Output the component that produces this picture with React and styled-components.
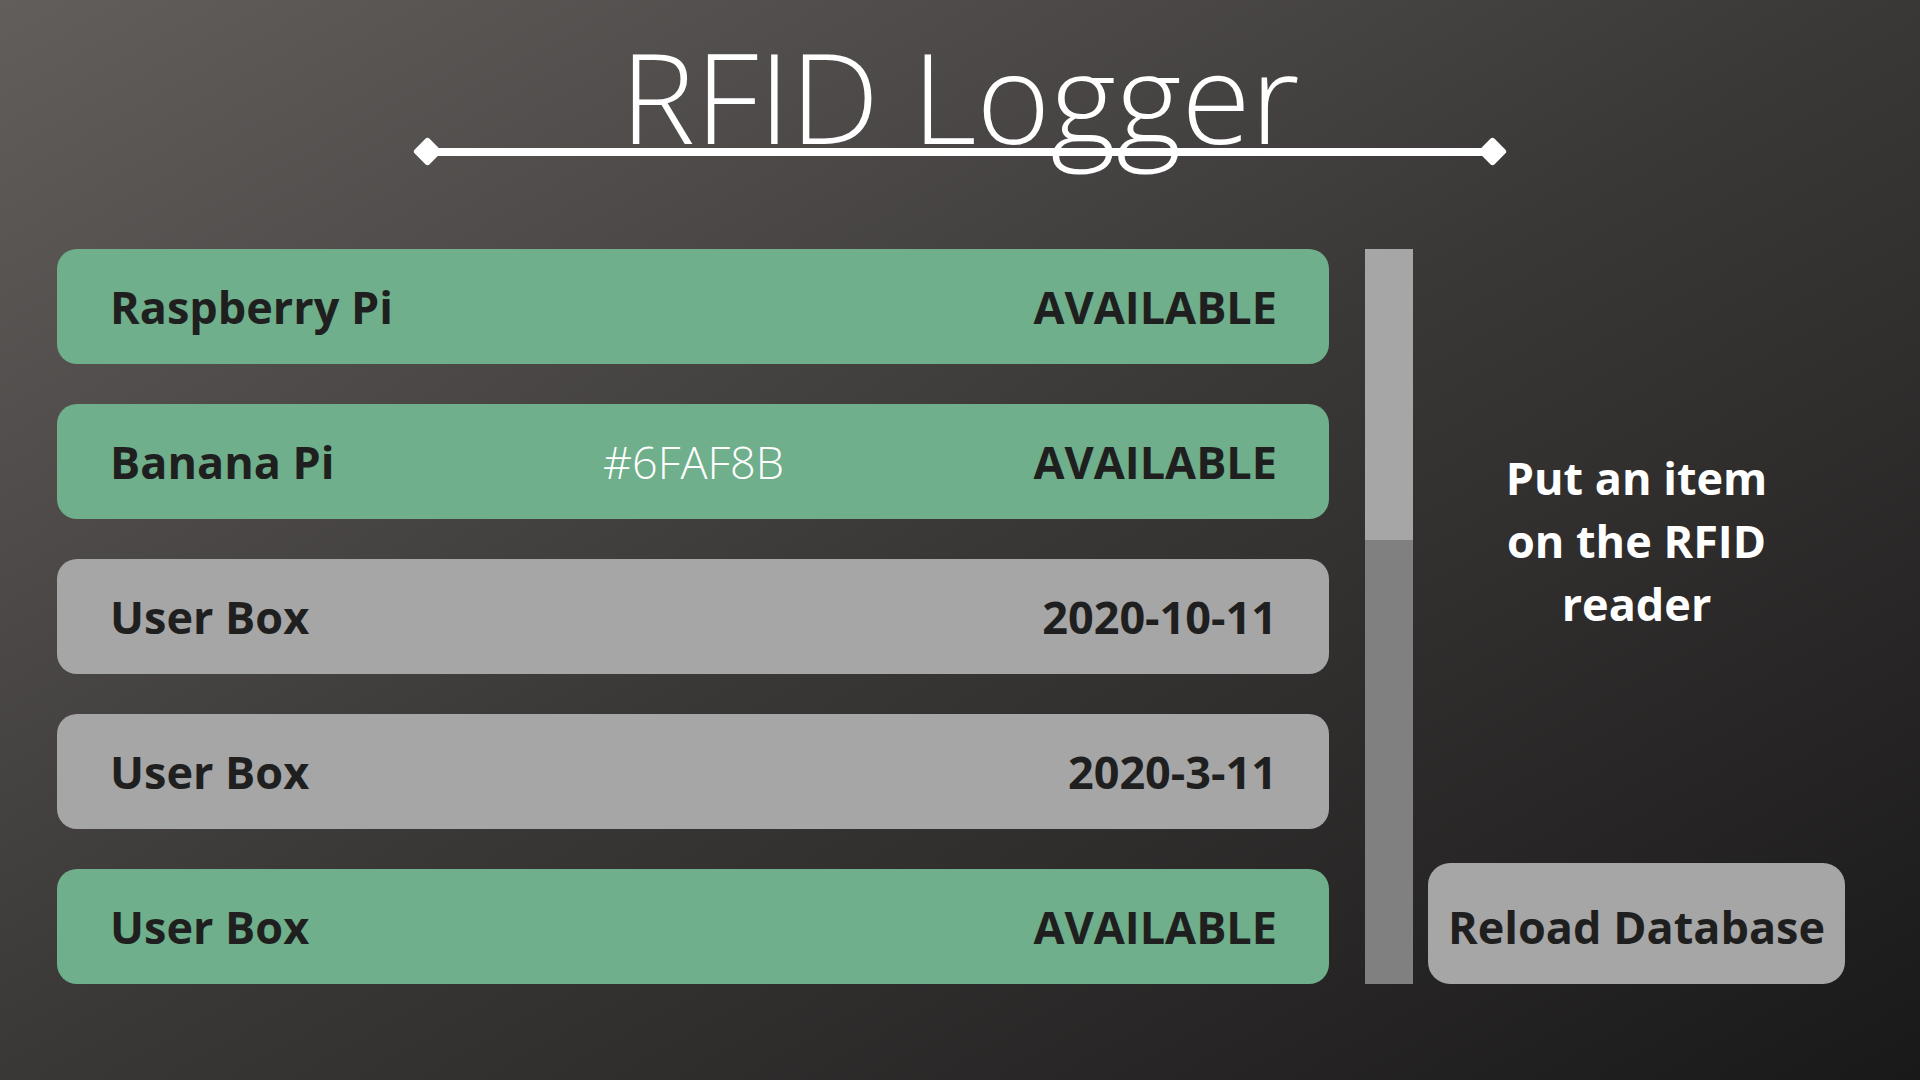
import styled, { createGlobalStyle } from "styled-components";

const GlobalStyle = createGlobalStyle`
  html, body {
    margin: 0;
    padding: 0;
  }
  body {
    font-family: "Open Sans", "Liberation Sans", sans-serif;
    background: #262525;
  }
`;

const items = [
  { name: "Raspberry Pi", status: "AVAILABLE", available: true },
  { name: "Banana Pi", note: "#6FAF8B", status: "AVAILABLE", available: true },
  { name: "User Box", status: "2020-10-11", available: false },
  { name: "User Box", status: "2020-3-11", available: false },
  { name: "User Box", status: "AVAILABLE", available: true },
];

const Divider = () => (
  <DividerSvg width="1096" height="32" viewBox="0 0 1096 32">
    <rect x="15" y="12" width="1066" height="8" fill="#fff" />
    <rect x="5" y="5" width="21" height="21" rx="3" fill="#fff" transform="rotate(45 15.5 15.5)" />
    <rect x="1070" y="5" width="21" height="21" rx="3" fill="#fff" transform="rotate(45 1080.5 15.5)" />
  </DividerSvg>
);

const App = () => {
  return (
    <Page>
      <GlobalStyle />
      <Header>
        <Title>RFID Logger</Title>
        <Divider />
      </Header>
      <Content>
        <ListArea>
          <RowList>
            {items.map((item, i) => (
              <Row key={i} $available={item.available}>
                <Name>{item.name}</Name>
                <Note>{item.note}</Note>
                <Status>{item.status}</Status>
              </Row>
            ))}
          </RowList>
          <ScrollTrack>
            <ScrollThumb />
          </ScrollTrack>
        </ListArea>
        <SidePanel>
          <Prompt>
            Put an item
            <br />
            on the RFID
            <br />
            reader
          </Prompt>
          <ReloadButton>Reload Database</ReloadButton>
        </SidePanel>
      </Content>
    </Page>
  );
};

const Page = styled.div`
  width: 1920px;
  height: 1080px;
  overflow: hidden;
  box-sizing: border-box;
  background: linear-gradient(to bottom right, #625e5c 0%, #3a3837 50%, #1a1919 100%);
`;

const Header = styled.header`
  display: flex;
  flex-direction: column;
  align-items: center;
  padding-top: 32px;
`;

const Title = styled.h1`
  margin: 0;
  font-family: "Open Sans", "Liberation Sans", sans-serif;
  font-weight: 300;
  font-size: 126px;
  line-height: 1;
  color: #ffffff;
`;

const DividerSvg = styled.svg`
  display: block;
  margin-top: -22px;
`;

const Content = styled.main`
  display: flex;
  align-items: stretch;
  padding: 81px 0 0 57px;
`;

const ListArea = styled.div`
  display: flex;
  gap: 36px;
`;

const RowList = styled.div`
  display: flex;
  flex-direction: column;
  gap: 40px;
  width: 1272px;
`;

const Row = styled.div`
  display: grid;
  grid-template-columns: 1fr auto 1fr;
  align-items: center;
  height: 115px;
  box-sizing: border-box;
  padding: 0 52px 0 53px;
  border-radius: 20px;
  background: ${(p) => (p.$available ? "#6faf8b" : "#a6a6a6")};
  color: #1f1f1f;
  font-weight: 700;
  font-size: 45px;
`;

const Name = styled.span`
  justify-self: start;
`;

const Note = styled.span`
  justify-self: center;
  font-weight: 300;
  color: #ffffff;
`;

const Status = styled.span`
  justify-self: end;
`;

const ScrollTrack = styled.div`
  width: 48px;
  background: #808080;
  display: flex;
  flex-direction: column;
`;

const ScrollThumb = styled.div`
  height: 291px;
  background: #a6a6a6;
`;

const SidePanel = styled.aside`
  display: flex;
  flex-direction: column;
  gap: 32px;
  width: 417px;
  margin-left: 15px;
`;

const Prompt = styled.p`
  flex: 1;
  margin: 0;
  display: flex;
  align-items: center;
  justify-content: center;
  text-align: center;
  color: #ffffff;
  font-weight: 700;
  font-size: 45px;
  line-height: 63px;
`;

const ReloadButton = styled.button`
  height: 121px;
  border: none;
  border-radius: 22px;
  background: #a6a6a6;
  color: #1f1f1f;
  font-family: "Open Sans", "Liberation Sans", sans-serif;
  font-weight: 700;
  font-size: 45px;
  padding: 6px 0 0;
  cursor: pointer;
`;

export default App;
